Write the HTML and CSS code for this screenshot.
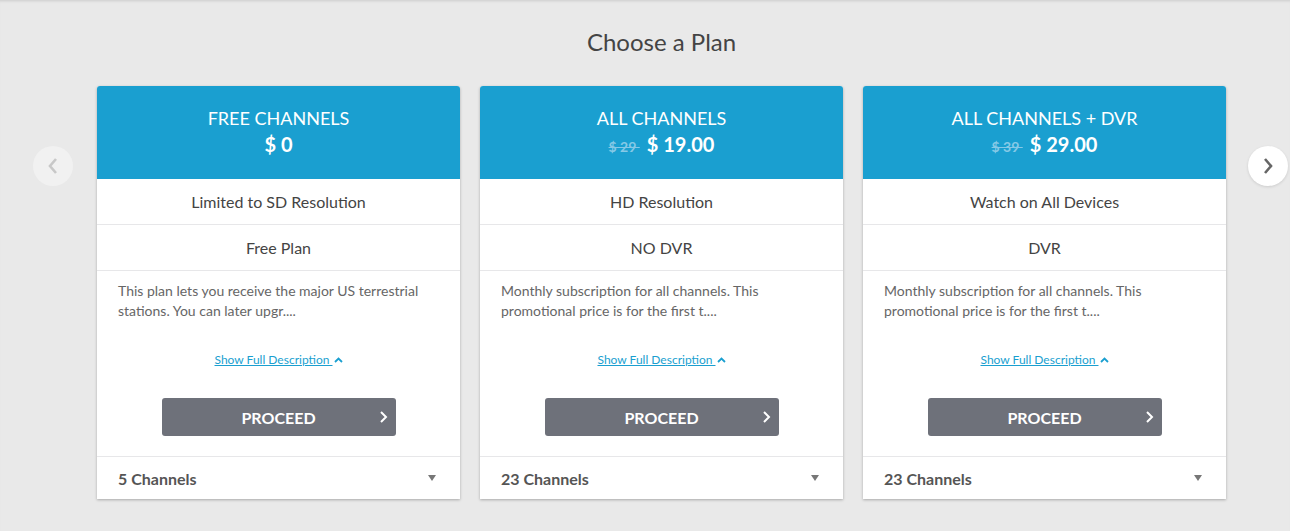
FILE: index.html
```html
<!DOCTYPE html>
<html>
<head>
<meta charset="utf-8">
<link rel="stylesheet" href="styles.css">
</head>
<body>
<div class="page">
  <div class="slider">
    <button class="nav nav-prev" aria-label="Previous">
      <svg width="14" height="18" viewBox="0 0 14 18"><path d="M10 2 L4 9 L10 16" fill="none" stroke="#c8c8c8" stroke-width="2.6"/></svg>
    </button>
    <div class="main">
      <h1 class="title">Choose a Plan</h1>
      <div class="cards">
        <div class="card">
          <div class="card-head">
            <div class="plan-name">FREE CHANNELS</div>
            <div class="plan-price"><span class="now">$ 0</span></div>
          </div>
          <div class="row">Limited to SD Resolution</div>
          <div class="row">Free Plan</div>
          <div class="desc">
            <p class="desc-text">This plan lets you receive the major US terrestrial stations. You can later upgr....</p>
            <div class="more"><a class="more-link" href="#">Show Full Description&nbsp;</a><svg class="up" width="9" height="6" viewBox="0 0 9 6"><path d="M1 5 L4.5 1.5 L8 5" fill="none" stroke="#1a9fd0" stroke-width="1.8"/></svg></div>
            <div class="btn-wrap"><button class="proceed">PROCEED<svg class="btn-chev" width="9" height="14" viewBox="0 0 9 14"><path d="M2 2 L7 7 L2 12" fill="none" stroke="#fff" stroke-width="2"/></svg></button></div>
          </div>
          <div class="foot"><span>5 Channels</span><span class="tri"></span></div>
        </div>
        <div class="card">
          <div class="card-head">
            <div class="plan-name">ALL CHANNELS</div>
            <div class="plan-price"><span class="old">$ 29&nbsp;</span><span class="now">$ 19.00</span></div>
          </div>
          <div class="row">HD Resolution</div>
          <div class="row">NO DVR</div>
          <div class="desc">
            <p class="desc-text">Monthly subscription for all channels. This promotional price is for the first t....</p>
            <div class="more"><a class="more-link" href="#">Show Full Description&nbsp;</a><svg class="up" width="9" height="6" viewBox="0 0 9 6"><path d="M1 5 L4.5 1.5 L8 5" fill="none" stroke="#1a9fd0" stroke-width="1.8"/></svg></div>
            <div class="btn-wrap"><button class="proceed">PROCEED<svg class="btn-chev" width="9" height="14" viewBox="0 0 9 14"><path d="M2 2 L7 7 L2 12" fill="none" stroke="#fff" stroke-width="2"/></svg></button></div>
          </div>
          <div class="foot"><span>23 Channels</span><span class="tri"></span></div>
        </div>
        <div class="card">
          <div class="card-head">
            <div class="plan-name">ALL CHANNELS + DVR</div>
            <div class="plan-price"><span class="old">$ 39&nbsp;</span><span class="now">$ 29.00</span></div>
          </div>
          <div class="row">Watch on All Devices</div>
          <div class="row">DVR</div>
          <div class="desc">
            <p class="desc-text">Monthly subscription for all channels. This promotional price is for the first t....</p>
            <div class="more"><a class="more-link" href="#">Show Full Description&nbsp;</a><svg class="up" width="9" height="6" viewBox="0 0 9 6"><path d="M1 5 L4.5 1.5 L8 5" fill="none" stroke="#1a9fd0" stroke-width="1.8"/></svg></div>
            <div class="btn-wrap"><button class="proceed">PROCEED<svg class="btn-chev" width="9" height="14" viewBox="0 0 9 14"><path d="M2 2 L7 7 L2 12" fill="none" stroke="#fff" stroke-width="2"/></svg></button></div>
          </div>
          <div class="foot"><span>23 Channels</span><span class="tri"></span></div>
        </div>
      </div>
    </div>
    <button class="nav nav-next" aria-label="Next">
      <svg width="14" height="18" viewBox="0 0 14 18"><path d="M4 2 L10 9 L4 16" fill="none" stroke="#666" stroke-width="2.6"/></svg>
    </button>
  </div>
</div>
</body>
</html>
```
FILE: styles.css
```css
* { box-sizing: border-box; }
html, body { margin: 0; padding: 0; }
body {
  background: #e9e9e9;
  font-family: Lato, "Open Sans", "Liberation Sans", sans-serif;
  color: #444;
  width: 1290px;
  height: 531px;
  overflow: hidden;
  box-shadow: inset 0 3px 3px -2px rgba(0,0,0,0.12);
}
.page { padding-top: 27px; }
.slider {
  display: flex;
  align-items: flex-start;
  padding-left: 33px;
}
.nav {
  width: 40px;
  height: 40px;
  border-radius: 50%;
  border: none;
  padding: 0;
  margin-top: 119px;
  display: flex;
  align-items: center;
  justify-content: center;
  cursor: pointer;
}
.nav-prev { background: #f1f1f1; margin-right: 24px; }
.nav-next {
  background: #fff;
  margin-left: 22px;
  box-shadow: 0 1px 3px rgba(0,0,0,0.12);
}
.main { width: 1129px; }
.title {
  margin: 0 0 29px;
  text-align: center;
  font-size: 24px;
  font-weight: 400;
  line-height: 30px;
  color: #444;
}
.cards {
  display: flex;
  gap: 20px;
}
.card {
  width: 363px;
  background: #fff;
  border-radius: 3px 3px 0 0;
  box-shadow: 0 1px 3px rgba(0,0,0,0.28);
}
.card-head {
  background: #1a9fd0;
  color: #fff;
  height: 93px;
  text-align: center;
  padding-top: 21px;
  border-radius: 3px 3px 0 0;
}
.plan-name {
  font-size: 18px;
  line-height: 22px;
}
.plan-price {
  margin-top: 2px;
  line-height: 26px;
  display: flex;
  justify-content: center;
  align-items: baseline;
  gap: 7px;
}
.now { font-size: 20px; font-weight: 700; }
.old {
  font-size: 14px;
  font-weight: 700;
  color: #86c9e6;
  text-decoration: line-through;
}
.row {
  height: 46px;
  border-bottom: 1px solid #e7e7e9;
  display: flex;
  align-items: center;
  justify-content: center;
  font-size: 16px;
  color: #444;
}
.desc {
  border-bottom: 1px solid #e7e7e9;
  padding-bottom: 20px;
}
.desc-text {
  margin: 0;
  padding: 10px 21px 0;
  font-size: 14px;
  line-height: 20px;
  color: #666;
}
.more {
  margin-top: 31px;
  height: 16px;
  display: flex;
  justify-content: center;
  align-items: center;
  font-size: 12px;
  line-height: 16px;
}
.more-link {
  color: #1a9fd0;
  text-decoration: underline;
}
.up { margin-left: 1px; margin-bottom: 1px; }
.btn-wrap {
  margin-top: 30px;
  display: flex;
  justify-content: center;
}
.proceed {
  position: relative;
  width: 234px;
  height: 38px;
  background: #6e717a;
  color: #fff;
  border: none;
  border-radius: 3px;
  font-family: inherit;
  font-size: 16px;
  font-weight: 700;
  padding: 0;
  cursor: pointer;
}
.btn-chev {
  position: absolute;
  right: 8px;
  top: 12px;
}
.foot {
  height: 42px;
  display: flex;
  align-items: center;
  justify-content: space-between;
  padding: 0 24px 0 21px;
  font-size: 16px;
  font-weight: 700;
  color: #555;
}
.tri {
  width: 0;
  height: 0;
  border-left: 4px solid transparent;
  border-right: 4px solid transparent;
  border-top: 6px solid #777;
}
```
